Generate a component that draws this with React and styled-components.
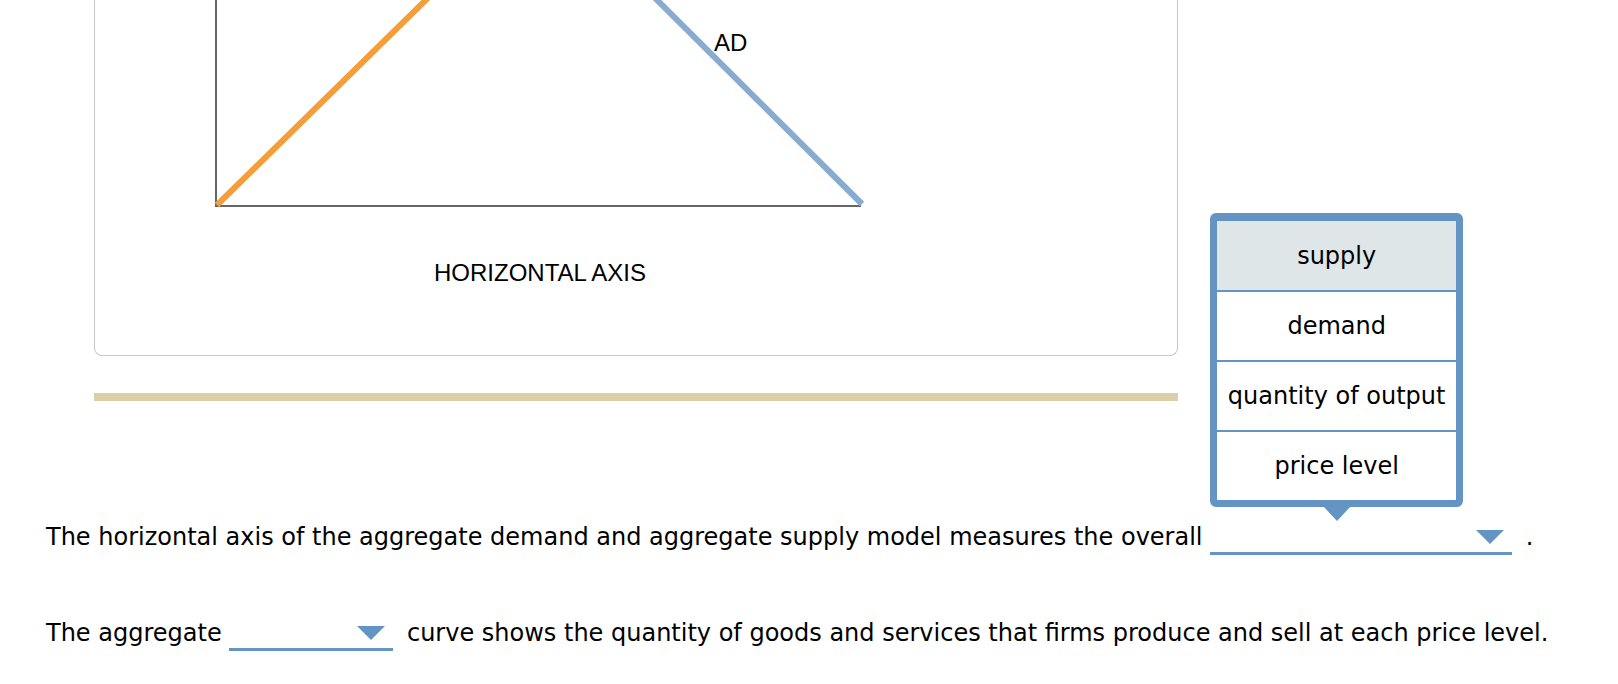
import styled, { createGlobalStyle } from 'styled-components';

const GlobalStyle = createGlobalStyle`
  body {
    margin: 0;
    background: #fff;
    color: #000;
    font-family: Verdana, "DejaVu Sans", sans-serif;
  }
`;

const Page = styled.div`
  padding-left: 46px;
`;

const GraphPanel = styled.div`
  box-sizing: border-box;
  width: 1084px;
  height: 356px;
  margin-left: 48px;
  border: 1px solid #c8c8c8;
  border-top: none;
  border-radius: 0 0 8px 8px;
`;

const ChartColumn = styled.div`
  width: 650px;
  margin-left: 120px;
`;

const Chart = styled.svg`
  display: block;
  overflow: visible;
`;

const AxisLabel = styled.div`
  margin-top: 29px;
  font-family: "Liberation Sans", Arial, sans-serif;
  font-size: 24px;
  line-height: 27px;
  text-align: center;
`;

const Rule = styled.div`
  width: 1084px;
  height: 8px;
  margin: 37px 0 0 48px;
  background: #dbd0a9;
`;

const Sentence = styled.p`
  margin: ${({ $gap }) => $gap}px 0 0;
  font-size: 24px;
  line-height: 28px;
  white-space: nowrap;
`;

const Dropdown = styled.span`
  position: relative;
  display: inline-block;
  box-sizing: border-box;
  width: ${({ $width }) => $width}px;
  height: 28px;
  margin-right: 6px;
  padding: 3px 8px 0 0;
  border-bottom: 3px solid #6394c4;
  vertical-align: -10px;
`;

const Caret = styled.span`
  display: block;
  width: 0;
  height: 0;
  margin-left: auto;
  border-left: 14px solid transparent;
  border-right: 14px solid transparent;
  border-top: 14px solid #6394c4;
`;

const Menu = styled.ul`
  position: absolute;
  left: 0;
  bottom: calc(100% + 20px);
  box-sizing: border-box;
  width: 253px;
  margin: 0;
  padding: 0;
  list-style: none;
  background: #fff;
  border: 7px solid #6394c4;
  border-top-width: 8px;
  border-radius: 6px;

  &::after {
    content: '';
    position: absolute;
    top: calc(100% + 6px);
    left: 50%;
    margin-left: -14px;
    border-left: 14px solid transparent;
    border-right: 14px solid transparent;
    border-top: 15px solid #6394c4;
  }
`;

const MenuItem = styled.li`
  display: flex;
  align-items: center;
  justify-content: center;
  height: 68px;
  font-size: 24px;
  background: ${({ $active }) => ($active ? '#dfe6e8' : '#fff')};

  &:first-child {
    height: 69px;
  }

  & + & {
    border-top: 2px solid #6394c4;
  }
`;

const options = ['supply', 'demand', 'quantity of output', 'price level'];

const AdAsChart = () => (
  <Chart width="650" height="230">
    <line x1="1" y1="-10" x2="1" y2="207" stroke="#666" strokeWidth="2" />
    <line x1="0" y1="206" x2="646" y2="206" stroke="#666" strokeWidth="2" />
    <line x1="2" y1="205" x2="221" y2="-10" stroke="#f39e38" strokeWidth="6" />
    <line x1="432" y1="-10" x2="647" y2="204" stroke="#88abd0" strokeWidth="6" />
    <text x="499" y="51" fontFamily="'Liberation Sans', Arial, sans-serif" fontSize="24" fill="#000">
      AD
    </text>
  </Chart>
);

const App = () => (
  <>
    <GlobalStyle />
    <Page>
      <GraphPanel>
        <ChartColumn>
          <AdAsChart />
          <AxisLabel>HORIZONTAL AXIS</AxisLabel>
        </ChartColumn>
      </GraphPanel>
      <Rule />
      <Sentence $gap={122}>
        The horizontal axis of the aggregate demand and aggregate supply model measures the overall{' '}
        <Dropdown $width={302}>
          <Caret />
          <Menu>
            {options.map((option, i) => (
              <MenuItem key={option} $active={i === 0}>
                {option}
              </MenuItem>
            ))}
          </Menu>
        </Dropdown>{' '}
        .
      </Sentence>
      <Sentence $gap={64}>
        The aggregate{' '}
        <Dropdown $width={164}>
          <Caret />
        </Dropdown>{' '}
        curve shows the quantity of goods and services that firms produce and sell at each price level.
      </Sentence>
    </Page>
  </>
);

export default App;
